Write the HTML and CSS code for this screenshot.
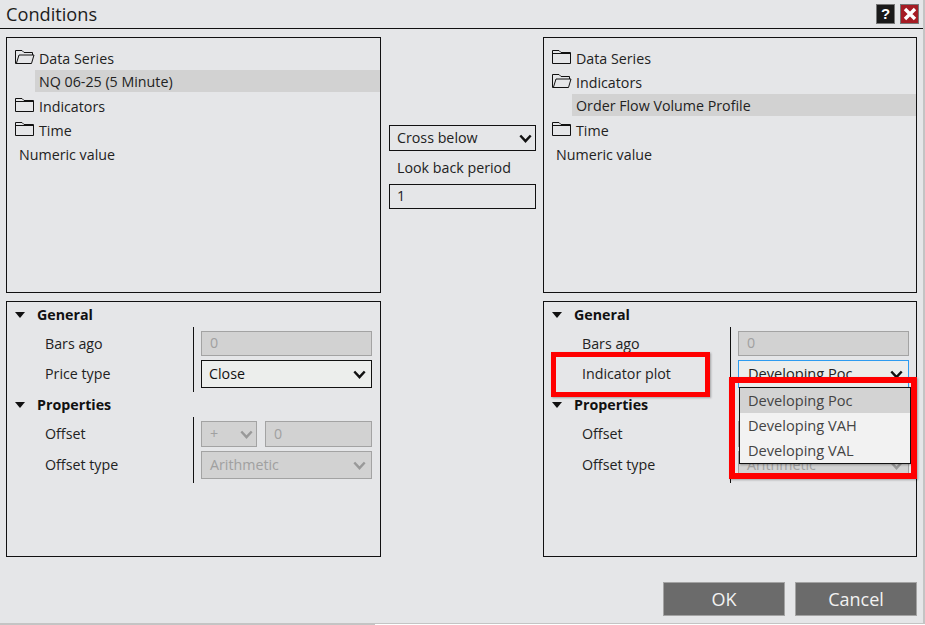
FILE: index.html
```html
<!DOCTYPE html>
<html lang="en">
<head>
    <meta charset="UTF-8">
    <title>Conditions</title>
    <link rel="stylesheet" href="styles.css">
</head>
<body>
    <div class="dialog">
        <header class="title-bar">
            <span class="title">Conditions</span>
            <button class="win-btn help-btn">?</button>
            <button class="win-btn close-btn">
                <svg width="14" height="14" viewBox="0 0 14 14"><path d="M2 2 12 12M12 2 2 12" stroke="#fff" stroke-width="3.4" fill="none"/></svg>
            </button>
        </header>

        <main class="columns">
            <!-- Lato sinistro -->
            <section class="side">
                <div class="panel tree">
                    <div class="tree-row">
                        <svg class="folder" width="20" height="16" viewBox="0 0 20 16"><path d="M.5 14.5V1.5H7L9 3.5H17.5V6M.5 14.5H16.5L19 6H4L1.5 14" fill="none" stroke="#111"/></svg>
                        <span>Data Series</span>
                    </div>
                    <div class="tree-row child selected">NQ 06-25 (5 Minute)</div>
                    <div class="tree-row">
                        <svg class="folder" width="20" height="16" viewBox="0 0 20 16"><path d="M.5 14.5V1.5H7L9 3.5H18.5V14.5ZM.5 4.5H18.5" fill="none" stroke="#111"/></svg>
                        <span>Indicators</span>
                    </div>
                    <div class="tree-row">
                        <svg class="folder" width="20" height="16" viewBox="0 0 20 16"><path d="M.5 14.5V1.5H7L9 3.5H18.5V14.5ZM.5 4.5H18.5" fill="none" stroke="#111"/></svg>
                        <span>Time</span>
                    </div>
                    <div class="tree-row leaf">Numeric value</div>
                </div>
                <div class="panel props">
                    <div class="group-head"><i class="caret"></i>General</div>
                    <div class="group-body">
                        <div class="labels">
                            <div class="label first">Bars ago</div>
                            <div class="label second">Price type</div>
                        </div>
                        <div class="values">
                            <div class="field disabled">0</div>
                            <div class="field select active-field">Close
                                <svg class="chev" viewBox="0 0 15 10"><path d="M1.5 1.5 7.5 8 13.5 1.5" fill="none" stroke="#111" stroke-width="2.8"/></svg>
                            </div>
                        </div>
                    </div>
                    <div class="group-head"><i class="caret"></i>Properties</div>
                    <div class="group-body">
                        <div class="labels">
                            <div class="label third">Offset</div>
                            <div class="label fourth">Offset type</div>
                        </div>
                        <div class="values">
                            <div class="offset-row">
                                <div class="field disabled select sign">+
                                    <svg class="chev" viewBox="0 0 15 10"><path d="M1.5 1.5 7.5 8 13.5 1.5" fill="none" stroke="#999" stroke-width="2.8"/></svg>
                                </div>
                                <div class="field disabled offset-val">0</div>
                            </div>
                            <div class="field disabled select tall">Arithmetic
                                <svg class="chev" viewBox="0 0 15 10"><path d="M1.5 1.5 7.5 8 13.5 1.5" fill="none" stroke="#999" stroke-width="2.8"/></svg>
                            </div>
                        </div>
                    </div>
                </div>
            </section>

            <!-- Colonna centrale -->
            <section class="middle">
                <div class="field select mid-select">Cross below
                    <svg class="chev" viewBox="0 0 15 10"><path d="M1.5 1.5 7.5 8 13.5 1.5" fill="none" stroke="#111" stroke-width="2.8"/></svg>
                </div>
                <div class="mid-label">Look back period</div>
                <div class="field mid-input">1</div>
            </section>

            <!-- Lato destro -->
            <section class="side">
                <div class="panel tree">
                    <div class="tree-row">
                        <svg class="folder" width="20" height="16" viewBox="0 0 20 16"><path d="M.5 14.5V1.5H7L9 3.5H18.5V14.5ZM.5 4.5H18.5" fill="none" stroke="#111"/></svg>
                        <span>Data Series</span>
                    </div>
                    <div class="tree-row">
                        <svg class="folder" width="20" height="16" viewBox="0 0 20 16"><path d="M.5 14.5V1.5H7L9 3.5H17.5V6M.5 14.5H16.5L19 6H4L1.5 14" fill="none" stroke="#111"/></svg>
                        <span>Indicators</span>
                    </div>
                    <div class="tree-row child selected">Order Flow Volume Profile</div>
                    <div class="tree-row">
                        <svg class="folder" width="20" height="16" viewBox="0 0 20 16"><path d="M.5 14.5V1.5H7L9 3.5H18.5V14.5ZM.5 4.5H18.5" fill="none" stroke="#111"/></svg>
                        <span>Time</span>
                    </div>
                    <div class="tree-row leaf">Numeric value</div>
                </div>
                <div class="panel props">
                    <div class="group-head"><i class="caret"></i>General</div>
                    <div class="group-body">
                        <div class="labels">
                            <div class="label first">Bars ago</div>
                            <div class="label second">Indicator plot</div>
                        </div>
                        <div class="values">
                            <div class="field disabled">0</div>
                            <div class="field select focused">Developing Poc
                                <svg class="chev" viewBox="0 0 15 10"><path d="M1.5 1.5 7.5 8 13.5 1.5" fill="none" stroke="#111" stroke-width="2.8"/></svg>
                            </div>
                        </div>
                    </div>
                    <div class="group-head"><i class="caret"></i>Properties</div>
                    <div class="group-body">
                        <div class="labels">
                            <div class="label third">Offset</div>
                            <div class="label fourth">Offset type</div>
                        </div>
                        <div class="values">
                            <div class="offset-row">
                                <div class="field disabled select sign">
                                    <svg class="chev" viewBox="0 0 15 10"><path d="M1.5 1.5 7.5 8 13.5 1.5" fill="none" stroke="#999" stroke-width="2.8"/></svg>
                                </div>
                                <div class="field disabled offset-val"></div>
                            </div>
                            <div class="field disabled select tall">Arithmetic
                                <svg class="chev" viewBox="0 0 15 10"><path d="M1.5 1.5 7.5 8 13.5 1.5" fill="none" stroke="#999" stroke-width="2.8"/></svg>
                            </div>
                        </div>
                    </div>

                    <!-- Menu aperto e riquadri rossi sopra il contenuto -->
                    <div class="dropdown">
                        <div class="dropdown-item current">Developing Poc</div>
                        <div class="dropdown-item">Developing VAH</div>
                        <div class="dropdown-item">Developing VAL</div>
                    </div>
                    <div class="mark mark-label"></div>
                    <div class="mark mark-menu"></div>
                </div>
            </section>
        </main>

        <footer class="actions">
            <button class="action-btn">OK</button>
            <button class="action-btn">Cancel</button>
        </footer>
    </div>
    <div class="bottom-edge"></div>
</body>
</html>
```

FILE: styles.css
```css
* {
    box-sizing: border-box;
}
body {
    margin: 0;
    background-color: #fff;
    font-family: "Open Sans", "Noto Sans", sans-serif;
    font-size: 14.25px;
    color: #222;
}
.dialog {
    width: 925px;
    height: 624px;
    display: flex;
    flex-direction: column;
    background-color: #e5e6e8;
    border-right: 2px solid #c4c4c4;
    border-bottom: 1px solid #c4c4c4;
}
.bottom-edge {
    width: 375px;
    height: 1px;
    background-color: #c4c4c4;
}
.title-bar {
    height: 29px;
    display: flex;
    align-items: center;
    gap: 5px;
    padding: 0 4px 1px 6px;
    border-bottom: 1px solid #111;
}
.title {
    flex: 1;
    font-size: 18.2px;
    color: #1c1c1c;
}
.win-btn {
    width: 19px;
    height: 20px;
    padding: 0;
    border: 1px solid #777;
    display: flex;
    align-items: center;
    justify-content: center;
    font-family: "Liberation Sans", sans-serif;
    font-size: 15px;
    font-weight: bold;
    color: #fff;
}
.help-btn {
    background-color: #1a1a1a;
}
.close-btn {
    background-color: #a51c24;
}
.columns {
    display: grid;
    grid-template-columns: 375px 148px 374px;
    column-gap: 7px;
    padding: 8px 0 0 6px;
}
.side {
    display: flex;
    flex-direction: column;
    gap: 8px;
}
.panel {
    border: 1px solid #111;
    height: 256px;
}
.tree {
    padding-top: 8px;
    display: flex;
    flex-direction: column;
    gap: 2px;
}
.tree-row {
    height: 22px;
    display: flex;
    align-items: center;
    gap: 4px;
    padding-left: 8px;
    white-space: nowrap;
}
.tree-row span {
    padding-top: 2px;
}
.tree-row.child {
    margin-left: 28px;
    padding-left: 4px;
}
.tree-row.leaf {
    padding: 2px 0 0 12px;
}
.selected {
    background-color: #d2d2d2;
}
.props {
    position: relative;
}
.group-head {
    height: 25px;
    display: flex;
    align-items: center;
    padding-left: 8px;
    font-weight: 700;
    color: #111;
}
.caret {
    width: 0;
    height: 0;
    margin-right: 12px;
    border-left: 5.5px solid transparent;
    border-right: 5.5px solid transparent;
    border-top: 6px solid #111;
}
.group-body {
    display: flex;
    padding-left: 38px;
}
.labels {
    width: 148px;
    display: flex;
    flex-direction: column;
}
.label {
    display: flex;
    align-items: center;
}
.label.first {
    height: 32px;
}
.label.second {
    height: 29px;
}
.label.third {
    height: 32px;
}
.label.fourth {
    height: 31px;
}
.values {
    width: 179px;
    display: flex;
    flex-direction: column;
    gap: 4px;
    padding: 4px 0 4px 7px;
    border-left: 1px solid #111;
}
.field {
    height: 25px;
    display: flex;
    align-items: center;
    padding: 0 0 2px 8px;
    border: 1px solid #111;
}
.select {
    height: 28px;
    justify-content: space-between;
    padding-right: 5px;
}
.chev {
    width: 13px;
    height: 9px;
    margin-top: 2px;
}
.disabled {
    background-color: #d2d2d2;
    border-color: #a3a3a3;
    color: #a0a0a0;
}
.active-field {
    background-color: #eceeec;
    color: #111;
    padding-left: 7px;
}
.focused {
    background-color: #eceeec;
    border-color: #2d9cf0;
    color: #222;
    padding-left: 9px;
    font-size: 14.6px;
}
.offset-row {
    display: flex;
    gap: 8px;
}
.sign {
    width: 56px;
    height: 26px;
    padding-right: 3px;
}
.offset-val {
    flex: 1;
    height: 26px;
}
.middle {
    margin-left: 1px;
    display: flex;
    flex-direction: column;
    padding-top: 88px;
}
.mid-select {
    height: 26px;
    padding-left: 7px;
    padding-right: 3px;
    color: #222;
}
.mid-input {
    padding-left: 7px;
}
.mid-label {
    height: 33px;
    display: flex;
    align-items: center;
    padding-left: 8px;
}
.actions {
    display: flex;
    justify-content: flex-end;
    gap: 10px;
    padding: 25px 6px 0 0;
}
.action-btn {
    width: 122px;
    height: 34px;
    padding: 0;
    border: 1px solid #a3a3a3;
    background-color: #6b6b6b;
    color: #f2f2f2;
    font-family: inherit;
    font-size: 18px;
}
.dropdown {
    position: absolute;
    left: 195px;
    top: 85px;
    width: 172px;
    border: 1px solid #111;
    background-color: #f2f2f2;
    box-shadow: 1px 1px 2px rgba(0, 0, 0, 0.3);
    font-size: 14.6px;
}
.dropdown-item {
    height: 25px;
    display: flex;
    align-items: center;
    padding: 0 0 2px 8px;
    color: #444;
}
.dropdown-item.current {
    background-color: #d3d3d3;
}
.mark {
    position: absolute;
    border: 5px solid #ff0000;
    box-shadow: 1px 1px 2px rgba(0, 0, 0, 0.3);
}
.mark-label {
    left: 7px;
    top: 50px;
    width: 159px;
    height: 45px;
}
.mark-menu {
    left: 185px;
    top: 75px;
    width: 188px;
    height: 102px;
    border-width: 6px;
}
```
